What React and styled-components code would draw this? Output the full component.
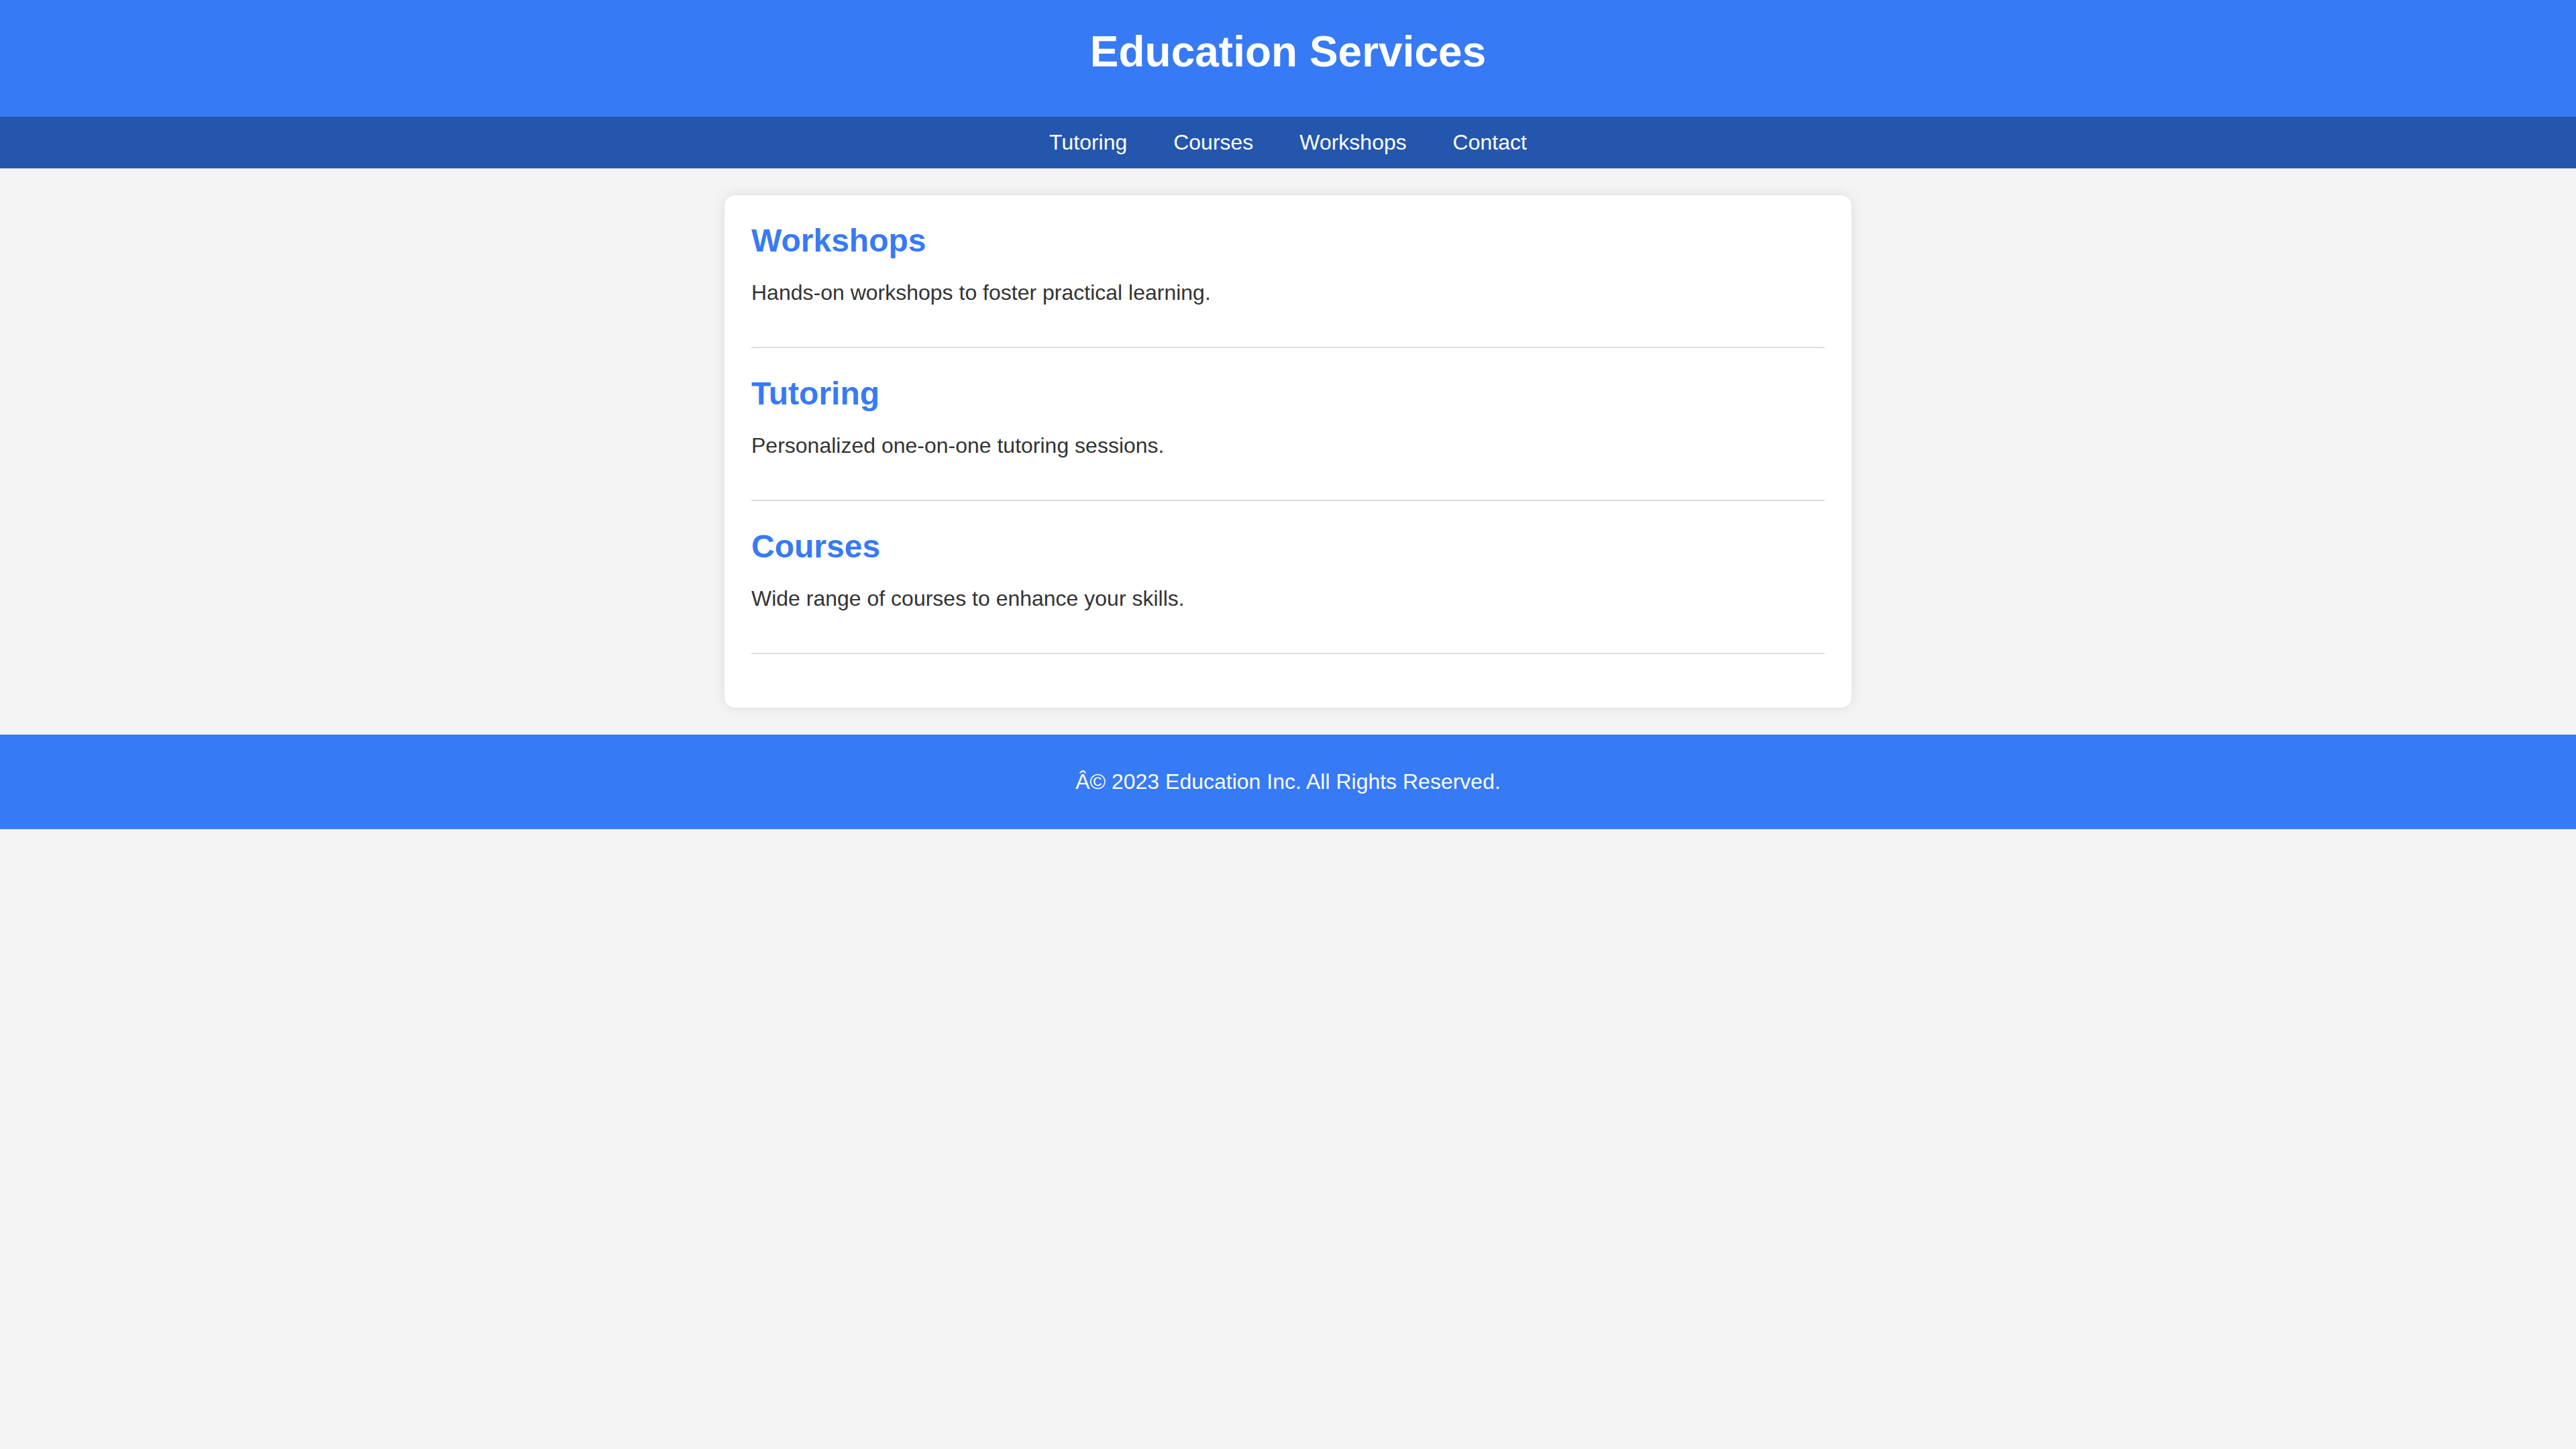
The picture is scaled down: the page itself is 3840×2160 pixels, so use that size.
import React from "react"
import styled, { createGlobalStyle } from "styled-components"

const GlobalStyle = createGlobalStyle`
  body {
    margin: 0;
    background-color: #f4f4f4;
    font-family: "Liberation Sans", Arial, sans-serif;
    color: #333;
  }
`

const services = [
  { title: "Workshops", text: "Hands-on workshops to foster practical learning." },
  { title: "Tutoring", text: "Personalized one-on-one tutoring sessions." },
  { title: "Courses", text: "Wide range of courses to enhance your skills." },
]

const links = ["Tutoring", "Courses", "Workshops", "Contact"]

export default function App() {
  return (
    <>
      <GlobalStyle />
      <Header>
        <Title>Education Services</Title>
      </Header>
      <Nav>
        {links.map((l, i) => (
          <React.Fragment key={l}>
            {i > 0 && " "}
            <NavLink href={"#" + l.toLowerCase()}>{l}</NavLink>
          </React.Fragment>
        ))}
      </Nav>
      <Card>
        {services.map((s) => (
          <Service key={s.title}>
            <ServiceTitle>{s.title}</ServiceTitle>
            <ServiceText>{s.text}</ServiceText>
          </Service>
        ))}
      </Card>
      <Footer>
        <FooterText>Â© 2023 Education Inc. All Rights Reserved.</FooterText>
      </Footer>
    </>
  )
}

const Header = styled.header`
  background-color: #377af5;
  color: white;
  padding: 40px;
  text-align: center;
`

const Title = styled.h1`
  margin: 0 0 20px;
  font-size: 64px;
  font-weight: bold;
`

const Nav = styled.nav`
  background-color: #2456ad;
  padding: 20px 0;
  text-align: center;
  font-size: 32px;
`

const NavLink = styled.a`
  color: white;
  text-decoration: none;
  margin: 0 30px;
`

const Card = styled.main`
  max-width: 1600px;
  margin: 40px auto;
  padding: 40px;
  background-color: white;
  border-radius: 16px;
  box-shadow: 0 0 20px rgba(0, 0, 0, 0.1);
`

const Service = styled.section`
  padding-bottom: 30px;
  margin-bottom: 40px;
  border-bottom: 2px solid #ddd;
`

const ServiceTitle = styled.h2`
  margin: 0 0 32px;
  font-size: 48px;
  font-weight: bold;
  color: #377af5;
`

const ServiceText = styled.p`
  margin: 0 0 32px;
  font-size: 32px;
`

const Footer = styled.footer`
  background-color: #377af5;
  color: white;
  padding: 20px;
  text-align: center;
`

const FooterText = styled.p`
  margin: 32px 0;
  font-size: 32px;
`
